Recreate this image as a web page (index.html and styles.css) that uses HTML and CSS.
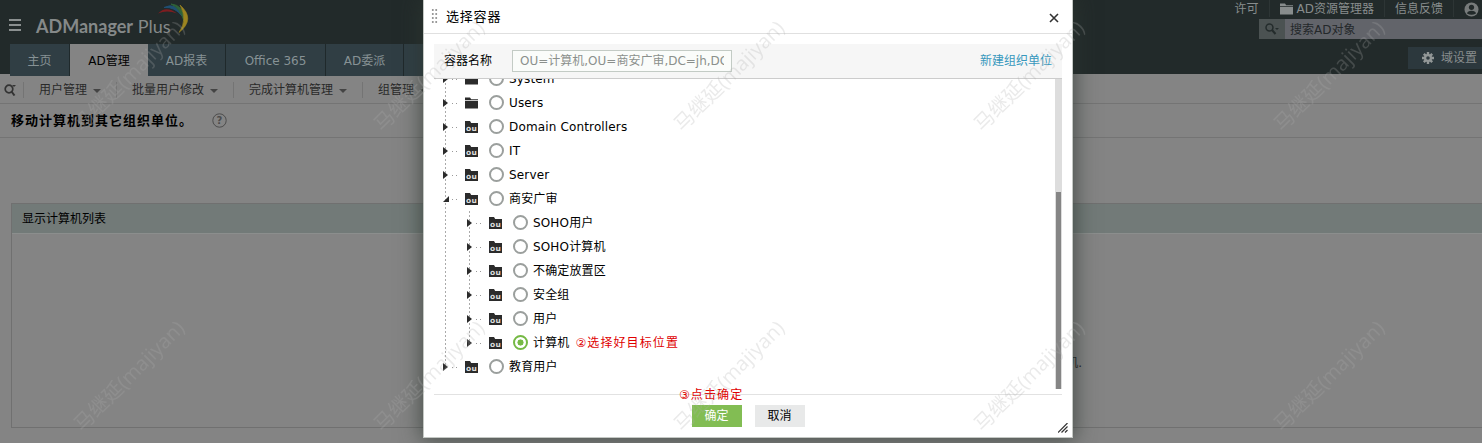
FILE: index.html
```html
<!DOCTYPE html>
<html lang="zh-CN">
<head>
<meta charset="utf-8">
<title>ADManager Plus</title>
<link rel="stylesheet" href="styles.css">
</head>
<body>
<svg width="0" height="0" class="defs">
  <symbol id="ou" viewBox="0 0 13 12"><path d="M0 0h5l1.200 2H13v10H0z" fill="#2b2b2b"/><text x="6.500" y="9.800" text-anchor="middle" class="ou-text">ou</text></symbol>
  <symbol id="folder" viewBox="0 0 13 12"><path d="M0 .5h5l1.200 1.800H13v.9H0zM0 4h13v7.500H0z" fill="currentColor"/></symbol>
</svg>
<div class="page">
  <header class="top">
    <div class="left">
      <div class="brand">
        <span class="burger"><i></i><i></i><i></i></span>
        <span class="name"><b>ADManager</b> Plus</span>
        <svg class="arc" width="34" height="36" viewBox="156 0 34 36">
          <path d="M158 13.500Q166 5 177 13.500Q167 9.500 158 13.500Z" fill="#7e1d20"/>
          <path d="M164 7.500Q176 1.500 182 16Q175 6.500 164 7.500Z" fill="#1f4f72" stroke="#1f4f72"/>
          <path d="M171 4Q184 5 184 21Q180 8 171 4Z" fill="#2f6238" stroke="#2f6238"/>
          <path d="M180 5Q196 19 179 32.500Q188 20 180 5Z" fill="#9c8420" stroke="#9c8420" stroke-width=".6"/>
        </svg>
      </div>
      <nav class="tabs"><span class="w60">主页</span><span class="w78 active">AD管理</span><span class="w78">AD报表</span><span class="w100">Office 365</span><span class="w78">AD委派</span><span class="w20"></span></nav>
    </div>
    <div class="right">
      <div class="links">
        <span>许可</span>
        <span><svg width="13" height="12"><use href="#folder"/></svg>AD资源管理器</span>
        <span>信息反馈</span>
        <span><svg width="15" height="15" viewBox="0 0 15 15"><circle cx="7.500" cy="7.500" r="7" fill="#777b7b"/><circle cx="7.500" cy="5.300" r="2.600" fill="#222a2a"/><path d="M3 11.500Q3.500 8.700 7.500 8.700T12 11.500Q7.500 14 3 11.500Z" fill="#222a2a"/></svg></span>
      </div>
      <div class="search">
        <span class="scope"><svg width="15" height="12" viewBox="0 0 15 12"><circle cx="4.500" cy="4.500" r="3.500" fill="none" stroke="#242c2c" stroke-width="1.500"/><path d="M7 7l3.500 4" stroke="#242c2c" stroke-width="2"/><path d="M10 5h4l-2 2z" fill="#242c2c"/></svg></span>
        <span class="query">搜索AD对象</span>
      </div>
      <div class="domain"><svg width="12" height="12" viewBox="-6 -6 12 12"><g stroke="#929797" stroke-width="2.400"><path d="M0-6V6M-6 0H6M-4.200-4.200L4.200 4.200M-4.200 4.200L4.200-4.200"/></g><circle r="4" fill="#929797"/><circle r="1.800" fill="#303b40"/></svg>域设置</div>
    </div>
  </header>
  <div class="submenu">
    <svg class="find" width="12" height="12" viewBox="0 0 12 12"><circle cx="5" cy="5" r="3.800" fill="none" stroke="#333" stroke-width="1.700"/><path d="M7.500 7.500l3 4" stroke="#333" stroke-width="2"/><path d="M8 1h4l-2 2z" fill="#333"/></svg>
    <span>用户管理</span><span>批量用户修改</span><span>完成计算机管理</span><span>组管理</span>
  </div>
  <div class="title">移动计算机到其它组织单位。<svg width="15" height="15" viewBox="0 0 15 15"><circle cx="7.500" cy="7.500" r="6.700" fill="none" stroke="#4c4c4c"/><text x="7.500" y="11.300" text-anchor="middle" class="q">?</text></svg></div>
  <section class="panel">
    <div class="panel-head">显示计算机列表</div>
    <p class="hint">机.</p>
  </section>
</div>

<div class="modal">
  <div class="modal-head"><span class="grip"></span><span class="modal-title">选择容器</span>
    <svg class="close" width="10" height="10" viewBox="0 0 10 10"><path d="M1 1l8 8M9 1L1 9" stroke="#333" stroke-width="1.600"/></svg>
  </div>
  <div class="bar"><label>容器名称</label><div class="field"><span>OU=计算机,OU=商安广审,DC=jh,DC</span></div><a>新建组织单位</a></div>
  <div class="body">
    <div class="tree">
      <div class="row"><i class="arrow"></i><i class="dots"></i><svg class="ic" width="13" height="12"><use href="#folder"/></svg><i class="radio"></i>System</div>
      <div class="row"><i class="arrow"></i><i class="dots"></i><svg class="ic" width="13" height="12"><use href="#folder"/></svg><i class="radio"></i>Users</div>
      <div class="row"><i class="arrow"></i><i class="dots"></i><svg class="ic" width="13" height="12"><use href="#ou"/></svg><i class="radio"></i>Domain Controllers</div>
      <div class="row"><i class="arrow"></i><i class="dots"></i><svg class="ic" width="13" height="12"><use href="#ou"/></svg><i class="radio"></i>IT</div>
      <div class="row"><i class="arrow"></i><i class="dots"></i><svg class="ic" width="13" height="12"><use href="#ou"/></svg><i class="radio"></i>Server</div>
      <div class="row"><i class="arrow open"></i><i class="dots"></i><svg class="ic" width="13" height="12"><use href="#ou"/></svg><i class="radio"></i>商安广审</div>
      <div class="sub">
        <div class="row"><i class="arrow"></i><i class="dots"></i><svg class="ic" width="13" height="12"><use href="#ou"/></svg><i class="radio"></i>SOHO用户</div>
        <div class="row"><i class="arrow"></i><i class="dots"></i><svg class="ic" width="13" height="12"><use href="#ou"/></svg><i class="radio"></i>SOHO计算机</div>
        <div class="row"><i class="arrow"></i><i class="dots"></i><svg class="ic" width="13" height="12"><use href="#ou"/></svg><i class="radio"></i>不确定放置区</div>
        <div class="row"><i class="arrow"></i><i class="dots"></i><svg class="ic" width="13" height="12"><use href="#ou"/></svg><i class="radio"></i>安全组</div>
        <div class="row"><i class="arrow"></i><i class="dots"></i><svg class="ic" width="13" height="12"><use href="#ou"/></svg><i class="radio"></i>用户</div>
        <div class="row"><i class="arrow"></i><i class="dots"></i><svg class="ic" width="13" height="12"><use href="#ou"/></svg><i class="radio on"></i>计算机<span class="note">②选择好目标位置</span></div>
      </div>
      <div class="row"><i class="arrow"></i><i class="dots"></i><svg class="ic" width="13" height="12"><use href="#ou"/></svg><i class="radio"></i>教育用户</div>
    </div>
    <div class="track"><div class="thumb"></div></div>
  </div>
  <div class="foot"><span class="btn ok">确定</span><span class="btn">取消</span><span class="note step3">③点击确定</span></div>
  <svg class="resize" width="10" height="10" viewBox="0 0 10 10"><path d="M0 9.500L9.500 0M3.500 9.500l6-6M7 9.500l2.500-2.500" stroke="#333" stroke-width="1.200"/></svg>
</div>

<svg class="marks" width="1482" height="443">
  <defs><pattern id="wm" width="300" height="300" patternUnits="userSpaceOnUse"><text transform="translate(129 76) rotate(-45)" text-anchor="middle" y="7" textLength="146" class="wm-text">马继延(majiyan)</text></pattern></defs>
  <rect width="1482" height="443" fill="url(#wm)"/>
</svg>
</body>
</html>
```
FILE: styles.css
```css
* { box-sizing: border-box; }
body { margin: 0; width: 1482px; height: 443px; overflow: hidden; position: relative; background: #848484; font: 12px/16px "DejaVu Sans", "Noto Sans CJK SC", sans-serif; color: #000; }
.defs { position: absolute; }
svg { flex: none; }
.ou-text { font: bold 7.5px "DejaVu Sans", sans-serif; fill: #ddd; }
.page { width: 1482px; }

.top { display: flex; justify-content: space-between; height: 74px; background: #222a2a; }
.brand { display: flex; align-items: flex-start; height: 44px; padding: 0 0 0 9px; }
.burger { display: flex; flex-direction: column; gap: 3px; margin-top: 19px; width: 12px; }
.burger i { height: 2px; background: #8b9090; }
.name { margin: 15px 0 0 15px; width: 135px; white-space: nowrap; font: 18px/22px Lato, sans-serif; color: #858989; }
.name b { font-weight: 700; }
.arc { margin: 0 0 0 -15px; }
.tabs { display: flex; width: 414px; height: 32px; margin-left: 10px; }
.tabs span { display: flex; align-items: center; justify-content: center; height: 32px; padding-top: 1px; background: #303e44; border-right: 1px solid #1f292b; color: #879295; white-space: nowrap; }
.tabs .active { background: #848484; color: #000; border-right: 0; }
.w20 { width: 20px; } .w60 { width: 60px; } .w78 { width: 78px; } .w100 { width: 100px; }
.right { display: flex; flex-direction: column; align-items: flex-end; width: 260px; color: #888d8d; }
.links { display: flex; height: 19px; }
.links span { display: flex; align-items: center; gap: 4px; height: 17px; padding: 1px 10px 0; border-left: 1px solid #2d3535; white-space: nowrap; }
.links span:first-child { border: 0; }
.links span:last-child { padding-right: 3px; }
.search { display: flex; height: 20px; width: 223px; }
.scope { display: flex; align-items: center; justify-content: center; width: 26px; background: #4b5252; }
.query { flex: 1; padding: 3px 5px 1px; background: #62646a; color: #24282a; }
.domain { display: flex; align-items: center; gap: 7px; width: 74px; height: 22px; margin-top: 8px; padding-left: 14px; background: #2c383d; white-space: nowrap; }

.submenu { display: flex; align-items: center; height: 30px; border-bottom: 1px solid #747474; padding: 2px 0 0 4px; color: #292929; }
.find { margin-right: 7px; }
.submenu span { display: flex; align-items: center; height: 16px; padding: 0 15px; border-left: 1px solid #747474; white-space: nowrap; }
.submenu span::after { content: ""; margin-left: 6px; border: 4px solid transparent; border-top-color: #444; border-bottom: 0; margin-top: 2px; }
.title { display: flex; align-items: center; height: 34px; padding-left: 11px; border-bottom: 1px solid #747474; font-size: 13px; font-weight: bold; letter-spacing: 1px; }
.title svg { margin-left: 19px; }
.q { font: bold 10px "DejaVu Sans", sans-serif; letter-spacing: 0; fill: #4c4c4c; }
.panel { height: 225px; margin: 65px 0 0 11px; border: 1px solid #707070; border-right: 0; }
.panel-head { height: 30px; padding: 7px 10px; background: #727a78; border-bottom: 1px solid #8b8e8d; }
.hint { margin: 121px 0 0; padding-right: 400px; text-align: right; color: #222; }

.modal { position: absolute; left: 423px; top: 0; width: 650px; height: 438px; background: #fff; border: 1px solid #c4c8c4; border-top: 0; box-shadow: 0 0 20px 2px rgba(45,55,48,.7); }
.modal-head { display: flex; height: 34px; border-bottom: 1px solid #e0e0e0; padding-left: 7px; }
.grip { width: 7px; height: 15px; margin-top: 8px; background: radial-gradient(circle, #999 35%, transparent 45%) 0 0 / 3.500px 4px; }
.modal-title { margin: 9px 0 0 8px; font-size: 13px; letter-spacing: 1px; }
.close { margin: 13px 13px 0 auto; }
.modal-title { letter-spacing: .8px; }
.bar { display: flex; align-items: center; height: 35px; margin: 10px 10px 0; padding: 0 10px; background: #f6f6f6; border-bottom: 1px solid #ccc; }
.bar label { width: 68px; }
.field { width: 220px; height: 22px; padding: 2px 7px; border: 1px solid #c3cbc5; background: #fafcfa; color: #8b908c; }
.field span { display: block; overflow: hidden; white-space: nowrap; }
.bar a { margin-left: auto; color: #3798bd; }
.body { display: flex; height: 310px; margin: 0 10px; overflow: hidden; }
.tree { flex: 1; margin-top: -12px; padding-left: 9px; letter-spacing: .15px; background: repeating-linear-gradient(#aaa 0 2px, transparent 2px 4px) 11px 0 / 1px 300px no-repeat; }
.row { display: flex; align-items: center; height: 24px; white-space: nowrap; }
.arrow { border: 4.500px solid transparent; border-left: 5px solid #2b2b2b; border-right: 0; width: 5px; }
.arrow.open { width: 6px; border: 0 solid transparent; border-left-width: 6px; border-bottom: 6px solid #2b2b2b; }
.dots { width: 8px; height: 1px; margin: 0 5px 0 4px; background: repeating-linear-gradient(90deg, #999 0 1px, transparent 1px 4px); }
.open + .dots { margin-left: 3px; }
.ic { margin-right: 11px; color: #2b2b2b; }
.radio { width: 15px; height: 15px; margin: -2px 5px 0 0; border: 2px solid #9b9f9d; border-radius: 50%; }
.radio.on { border-color: #75b944; background: radial-gradient(circle, #75b944 2.800px, #fff 3.300px); }
.sub { padding-left: 24px; background: repeating-linear-gradient(#aaa 0 2px, transparent 2px 4px) 26px 0 / 1px 132px no-repeat; }
.note { color: #e00000; margin-left: 6px; letter-spacing: 1.1px; }
.track { width: 7px; background: #ddd; }
.thumb { height: 197px; margin: 113px 1px 0; background: #858585; }
.foot { position: relative; display: flex; justify-content: center; gap: 13px; margin: 5px 10px 0; padding: 10px 0 0; border-top: 1px solid #e2e2e2; }
.btn { width: 50px; height: 22px; line-height: 23px; text-align: center; background: #e8e9e9; }
.ok { background: #82bd53; color: #fff; }
.step3 { position: absolute; left: 239px; top: -8px; }
.resize { position: absolute; right: 4px; bottom: 4px; }
.marks { position: absolute; left: 0; top: 0; pointer-events: none; }
.wm-text { font: 20px "Open Sans", "Noto Sans CJK SC", sans-serif; fill: rgba(170,170,170,.25); }
```
